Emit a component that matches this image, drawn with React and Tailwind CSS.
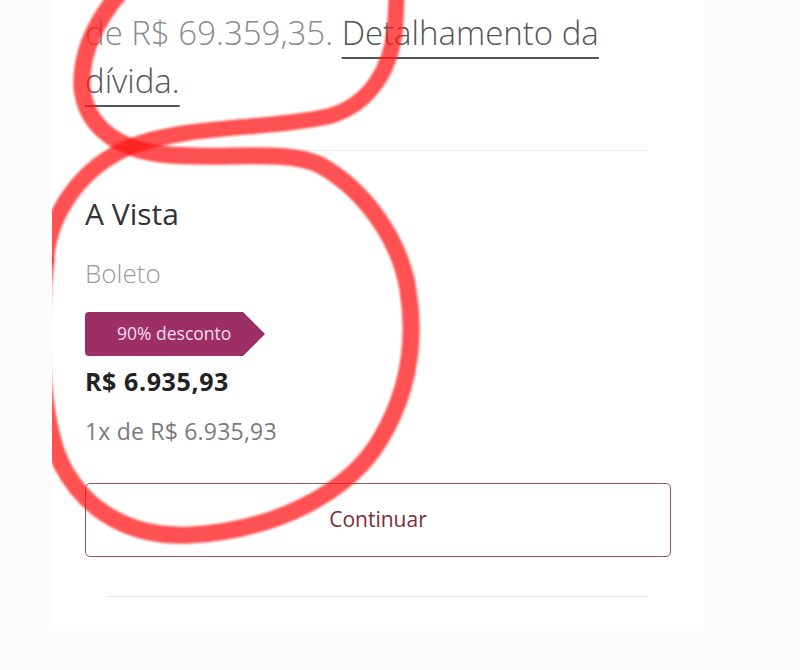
import React from 'react';

function Annotation() {
  // hand-drawn red marker loops drawn over the screenshot
  return (
    <svg className="absolute left-0 top-0 pointer-events-none" width="800" height="670" viewBox="0 0 800 670">
      <defs>
        <clipPath id="cardClip">
          <rect x="52" y="0" width="748" height="670" />
        </clipPath>
        <filter id="soft" x="-10%" y="-10%" width="120%" height="120%">
          <feGaussianBlur stdDeviation="0.8" />
        </filter>
      </defs>
      <g clipPath="url(#cardClip)" filter="url(#soft)" fill="none" strokeLinecap="round">
        <path
          d="M 124,-12 C 100,15 80,50 82,88 C 86,125 115,148 160,154 C 220,161 285,148 320,165 C 365,190 400,240 408,290 C 416,340 410,390 380,440 C 350,490 280,530 190,535 C 130,538 85,510 62,465 C 40,420 38,330 46,260"
          stroke="#ff1a1a"
          strokeWidth="17"
          opacity="0.76"
        />
        <path
          d="M 46,260 C 50,212 82,166 132,146 C 192,124 270,130 330,116 C 370,104 390,70 395,30 L 397,-12"
          stroke="#ff1a1a"
          strokeWidth="16"
          opacity="0.76"
        />
      </g>
    </svg>
  );
}

export default function App() {
  return (
    <div className="relative w-[800px] h-[670px] overflow-hidden bg-[#fcfcfc] font-['Open_Sans',sans-serif]">
      <div className="ml-[52px] w-[652px] h-[625px] bg-white pl-[33px] pr-[33px] pt-[9px]">
        <p className="w-[570px] text-[33px] leading-[48px] font-light text-[#8a8a8a]">
          de R$ 69.359,35.{' '}
          <a className="text-[#555] underline decoration-[1.5px] underline-offset-[12px]">Detalhamento da dívida.</a>
        </p>

        <div className="mx-[23px] mt-[45px] h-px bg-[#ececec]" />

        <h3 className="mt-[48px] text-[30px] leading-none font-normal text-[#333]">A Vista</h3>
        <div className="mt-[31px] text-[26px] leading-none font-light text-[#999]">Boleto</div>

        <div className="mt-[26px] flex items-center">
          <div className="h-[44px] rounded-l-[4px] bg-[#9b2f66] pl-[32px] pr-[12px] flex items-center text-[17.5px] leading-none text-[#f8dceb]">
            90% desconto
          </div>
          <div className="w-0 h-0 border-y-[22px] border-y-transparent border-l-[22px] border-l-[#9b2f66]" />
        </div>

        <div className="mt-[13px] text-[25px] leading-none font-bold tracking-[0.6px] text-[#222]">R$ 6.935,93</div>
        <div className="mt-[26px] text-[23px] leading-none tracking-[0.2px] text-[#7a7a7a]">1x de R$ 6.935,93</div>

        <button className="mt-[40px] w-full h-[74px] rounded-[5px] border border-[#8e5560] bg-white text-[21px] text-[#7b2d3c]">
          Continuar
        </button>

        <div className="mx-[23px] mt-[39px] h-px bg-[#e6e6e6]" />
      </div>
      <Annotation />
    </div>
  );
}
